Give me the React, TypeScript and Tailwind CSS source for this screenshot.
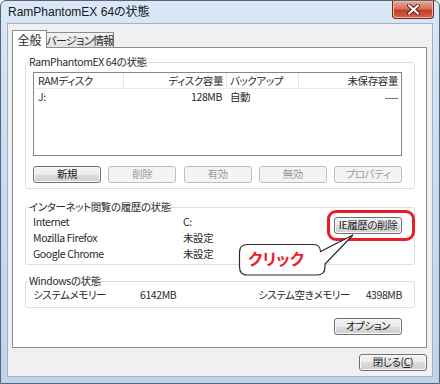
import type { ReactNode } from 'react'
import clsx from 'clsx'

function Btn({ children, disabled, className }: { children: ReactNode; disabled?: boolean; className?: string }) {
  return (
    <div
      className={clsx(
        'flex h-[17px] w-[68px] items-center justify-center whitespace-nowrap rounded-[3px] border text-[10.5px] leading-none',
        disabled
          ? 'border-[#bcc0c3] bg-[#f4f4f4] text-[#9a9a9a]'
          : 'border-[#707070] bg-[linear-gradient(#f3f3f3_0%,#ececec_50%,#dcdcdc_50%,#d0d0d0_100%)] text-[#222] shadow-[inset_0_0_0_1px_#fbfbfb]',
        className,
      )}
    >
      {children}
    </div>
  )
}

function Group({ title, children, className }: { title: string; children: ReactNode; className?: string }) {
  return (
    <fieldset className={clsx('rounded-[3px] border border-[#d5dfe5] pl-[7px] pr-[12px]', className)}>
      <legend className="-ml-[4px] whitespace-nowrap px-0 text-[10.5px] leading-[14px]">{title}</legend>
      {children}
    </fieldset>
  )
}

export default function App() {
  return (
    <div className="relative flex h-[384px] w-[440px] flex-col overflow-hidden rounded-t-[6px] border border-[#55657a] bg-[linear-gradient(180deg,#dbe7f4_0%,#cddff1_30%,#bfd4eb_100%)] font-['Noto_Sans_CJK_JP',sans-serif] tracking-[-0.4px] text-[#2a2a2a] [font-feature-settings:'palt']">
      {/* タイトルバー */}
      <div className="flex h-[22px] items-center pl-[7px] font-['Liberation_Sans','Noto_Sans_CJK_JP',sans-serif] text-[12px] leading-none tracking-normal text-[#0f1a26]">
        RamPhantomEX 64の状態
      </div>
      <div className="absolute right-[5px] top-0 flex h-[18px] w-[42px] items-center justify-center rounded-b-[4px] border border-t-0 border-[#6e2a20] bg-[linear-gradient(180deg,#e9a99a_0%,#d7705c_45%,#c23d25_55%,#d9604a_100%)] shadow-[inset_0_0_0_1px_#f1b8aa]">
        <svg width="13" height="11" viewBox="0 0 13 11">
          <path d="M2 1.5 L11 9.5 M11 1.5 L2 9.5" stroke="#5a1a12" strokeWidth="4" strokeLinecap="round" />
          <path d="M2 1.5 L11 9.5 M11 1.5 L2 9.5" stroke="#ffffff" strokeWidth="2.2" strokeLinecap="round" />
        </svg>
      </div>

      {/* クライアント領域 */}
      <div className="mx-[6px] mb-[6px] flex flex-1 flex-col border border-[#9fb2c6] bg-[#f0f0f0] pl-[4px] pr-[5px] pt-[6px]">
        {/* タブ */}
        <div className="flex h-[17px] items-end">
          <div className="relative z-10 -mb-[1px] flex h-[18px] w-[35px] items-start justify-center border border-b-0 border-[#898c95] bg-white pt-[2px] text-[12px] leading-[13px] tracking-normal">
            全般
          </div>
          <div className="flex h-[15px] w-[67px] items-center justify-center whitespace-nowrap border border-b-0 border-l-0 border-[#898c95] bg-[linear-gradient(#f3f3f3,#e2e2e2)] text-[11px] leading-none tracking-[-0.6px]">
            バージョン情報
          </div>
        </div>

        {/* タブパネル */}
        <div className="flex h-[301px] flex-col border border-[#898c95] bg-white pl-[12px] pr-[11px] pt-[7px]">
          <Group title="RamPhantomEX 64の状態" className="pb-[5px]">
            <div className="mt-[3px] h-[84px] border border-[#828790] text-[10.5px]">
              <div className="grid h-[16px] grid-cols-[90px_103px_72px_1fr] border-b border-[#eaeaea] leading-[15px]">
                <div className="border-r border-[#e5e5e5] pl-[4px]">RAMディスク</div>
                <div className="border-r border-[#e5e5e5] pr-[3px] text-right">ディスク容量</div>
                <div className="border-r border-[#e5e5e5] pl-[3px]">バックアップ</div>
                <div className="pr-[3px] text-right">未保存容量</div>
              </div>
              <div className="grid grid-cols-[90px_103px_72px_1fr] leading-[15px]">
                <div className="pl-[4px]">J:</div>
                <div className="pr-[5px] text-right">128MB</div>
                <div className="pl-[3px]">自動</div>
                <div className="pr-[3px] text-right">----</div>
              </div>
            </div>
            <div className="mt-[10px] flex justify-between">
              <Btn>新規</Btn>
              <Btn disabled>削除</Btn>
              <Btn disabled>有効</Btn>
              <Btn disabled>無効</Btn>
              <Btn disabled>プロパティ</Btn>
            </div>
          </Group>

          <Group title="インターネット閲覧の履歴の状態" className="mt-[11px] pb-[2px]">
            <div className="flex">
              <div className="grid flex-1 grid-cols-[150px_1fr] text-[10.5px] leading-[16px]">
                <div>Internet</div>
                <div>C:</div>
                <div>Mozilla Firefox</div>
                <div>未設定</div>
                <div>Google Chrome</div>
                <div>未設定</div>
              </div>
              <Btn className="mt-[3px]">IE履歴の削除</Btn>
            </div>
          </Group>

          <Group title="Windowsの状態" className="mt-[9px] pb-[6px]">
            <div className="grid grid-cols-[107px_118px_1fr_auto] text-[10.5px] leading-[13px]">
              <div>システムメモリー</div>
              <div>6142MB</div>
              <div>システム空きメモリー</div>
              <div>4398MB</div>
            </div>
          </Group>

          <div className="mt-[10px] flex justify-end pr-[13px]">
            <Btn>オプション</Btn>
          </div>
        </div>

        <div className="mt-[6px] flex justify-end">
          <Btn>閉じる(<span className="underline">C</span>)</Btn>
        </div>
      </div>

      {/* 注釈 */}
      <div className="absolute left-[326px] top-[209px] h-[31px] w-[88px] rounded-[9px] border-[3px] border-[#ec1c24]" />
      <svg className="absolute left-[230px] top-[225px]" width="130" height="55" viewBox="0 0 130 55">
        <path
          d="M16.5 18.5 H83 Q89 18.5 89.5 25.5 L122 9 L94 38 V41 Q94 49 86 49 H16.5 Q8.5 49 8.5 41 V26.5 Q8.5 18.5 16.5 18.5 Z"
          fill="#ffffff"
          stroke="#2b2b2b"
          strokeWidth="1.2"
        />
      </svg>
      <div className="absolute left-[247px] top-[247px] text-[16px] font-bold leading-[20px] tracking-normal text-[#ec1c24]">クリック</div>
    </div>
  )
}
